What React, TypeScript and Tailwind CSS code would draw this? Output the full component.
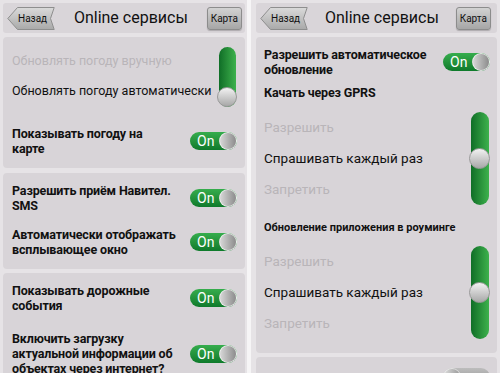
import type { ReactNode } from "react";

const font = { fontFamily: "Roboto, 'Noto Sans', sans-serif" };

function BackButton({ id }: { id: string }) {
  return (
    <div className="relative h-[23px] w-[48px] shrink-0">
      <svg width="48" height="23" viewBox="0 0 48 23" className="absolute inset-0">
        <defs>
          <linearGradient id={id} x1="0" y1="0" x2="0" y2="1">
            <stop offset="0" stopColor="#dadada" />
            <stop offset="1" stopColor="#a9a9a9" />
          </linearGradient>
        </defs>
        <path d="M0.8 11.5 L10.5 0.5 H47.2 L43.5 11.5 L47.2 22.5 H10.5 Z" fill={`url(#${id})`} stroke="#8e8e8e" />
      </svg>
      <span className="absolute left-[11px] top-0 text-[10px] leading-[23px] text-[#111]">Назад</span>
    </div>
  );
}

function Header({ className, gradId }: { className: string; gradId: string }) {
  return (
    <div className={`flex h-[30px] shrink-0 items-center rounded-[3px] bg-[#d9d5d9] ${className}`}>
      <BackButton id={gradId} />
      <div className="flex-1 text-center text-[16px] text-[#111]">Online сервисы</div>
      <div className="flex h-[23px] items-center rounded-[3px] border border-[#8c8c8c] bg-linear-to-b from-[#d2d2d2] to-[#a6a6a6] px-[3px] text-[10px] text-[#111] shadow-[0_1px_1px_rgba(0,0,0,0.2)]">
        Карта
      </div>
    </div>
  );
}

function Card({ children, className = "" }: { children: ReactNode; className?: string }) {
  return <div className={`shrink-0 rounded-[4px] bg-[#d8d4d8] ${className}`}>{children}</div>;
}

function Toggle({ on = true }: { on?: boolean }) {
  if (!on) {
    return (
      <div className="relative h-[18px] w-[47px] shrink-0 rounded-full bg-linear-to-b from-[#bdbdbd] to-[#8e8e8e]">
        <span className="absolute left-0 top-0 h-[18px] w-[18px] rounded-full border border-white/60 bg-linear-to-r from-[#dcdcdc] to-[#9a9a9a]" />
      </div>
    );
  }
  return (
    <div className="relative h-[18px] w-[47px] shrink-0 rounded-full bg-linear-to-b from-[#36ad4d] to-[#0e7a2b]">
      <span className="absolute left-[7px] top-0 text-[14px] leading-[18px] text-white">On</span>
      <span className="absolute right-0 top-0 h-[18px] w-[18px] rounded-full border border-white/70 bg-linear-to-r from-[#d8d8d8] to-[#8c8c8c]" />
    </div>
  );
}

function ToggleRow({ lines }: { lines: string[] }) {
  return (
    <div className="flex items-center justify-between gap-2">
      <div className="whitespace-nowrap text-[12.5px] font-bold leading-[15px] tracking-[-0.15px] text-[#111]">
        {lines.map((l) => (
          <div key={l}>{l}</div>
        ))}
      </div>
      <Toggle />
    </div>
  );
}

function TwoWay() {
  return (
    <div className="relative h-[60px] w-[20px] shrink-0">
      <div className="absolute left-[2px] top-0 h-full w-[17px] rounded-full bg-linear-to-r from-[#0f6e27] to-[#3db24d]" />
      <div className="absolute bottom-0 left-0 h-[20px] w-[20px] rounded-full border border-[#9a9a9a] bg-linear-to-b from-[#f2f2f2] to-[#a8a8a8]" />
    </div>
  );
}

function ThreeWay({ options }: { options: string[] }) {
  return (
    <div className="flex items-stretch justify-between">
      <div className="flex flex-col">
        {options.map((o, i) => (
          <div
            key={o}
            className={`flex h-[31px] items-center whitespace-nowrap text-[13.5px] ${i === 1 ? "text-[#111]" : "text-[#b9b5b9]"}`}
          >
            {o}
          </div>
        ))}
      </div>
      <div className="relative h-[93px] w-[21px] shrink-0">
        <div className="absolute left-[2px] top-0 h-full w-[18px] rounded-full bg-linear-to-r from-[#0f6e27] to-[#3db24d]" />
        <div className="absolute left-0 top-[36px] h-[21px] w-[21px] rounded-full border border-[#9a9a9a] bg-linear-to-b from-[#f2f2f2] to-[#a8a8a8]" />
      </div>
    </div>
  );
}

const options = ["Разрешить", "Спрашивать каждый раз", "Запретить"];

export default function App() {
  return (
    <div className="flex h-[373px] w-[500px] overflow-hidden bg-[#e6e3e6]" style={font}>
      <div className="flex w-[247px] shrink-0 flex-col pl-[3px] pr-[2px] pt-[3px]">
        <Header className="pl-[4px] pr-[3px]" gradId="backA" />

        <Card className="mt-[4px] pb-[12px] pl-[9px] pr-[8px] pt-[9px]">
          <div className="flex items-start justify-between">
            <div className="flex flex-col whitespace-nowrap text-[12.5px]">
              <div className="flex h-[30px] items-center text-[#b9b5b9]">Обновлять погоду вручную</div>
              <div className="flex h-[30px] items-center text-[#111]">Обновлять погоду автоматически</div>
            </div>
            <div className="mt-[1px]">
              <TwoWay />
            </div>
          </div>
          <div className="mt-[19px]">
            <ToggleRow lines={["Показывать погоду на", "карте"]} />
          </div>
        </Card>

        <Card className="mt-[5px] flex flex-col gap-[14px] pb-[12px] pl-[9px] pr-[8px] pt-[10px]">
          <ToggleRow lines={["Разрешить приём Навител.", "SMS"]} />
          <ToggleRow lines={["Автоматически отображать", "всплывающее окно"]} />
        </Card>

        <Card className="mt-[4px] flex flex-col gap-[18px] pb-[12px] pl-[9px] pr-[8px] pt-[10px]">
          <ToggleRow lines={["Показывать дорожные", "события"]} />
          <ToggleRow lines={["Включить загрузку", "актуальной информации об", "объектах через интернет?"]} />
        </Card>
      </div>

      <div className="w-[4px] shrink-0 bg-[#f6f5f6]" />

      <div className="flex flex-1 flex-col pl-[5px] pr-[3px] pt-[3px]">
        <Header className="pl-[4px] pr-[6px]" gradId="backB" />

        <Card className="mt-[4px] pb-[14px] pl-[8px] pr-[7px] pt-[10px]">
          <ToggleRow lines={["Разрешить автоматическое", "обновление"]} />
          <div className="mt-[8px] text-[12.5px] font-bold leading-[15px] tracking-[-0.15px] text-[#111]">Качать через GPRS</div>
          <div className="mt-[12px]">
            <ThreeWay options={options} />
          </div>
          <div className="mt-[15px] whitespace-nowrap text-[11px] font-bold leading-[15px] text-[#111]">
            Обновление приложения в роуминге
          </div>
          <div className="mt-[11px]">
            <ThreeWay options={options} />
          </div>
        </Card>

        <Card className="mt-[4px] h-[40px] pr-[7px] pt-[11px]">
          <div className="flex justify-end">
            <Toggle on={false} />
          </div>
        </Card>
      </div>
    </div>
  );
}
